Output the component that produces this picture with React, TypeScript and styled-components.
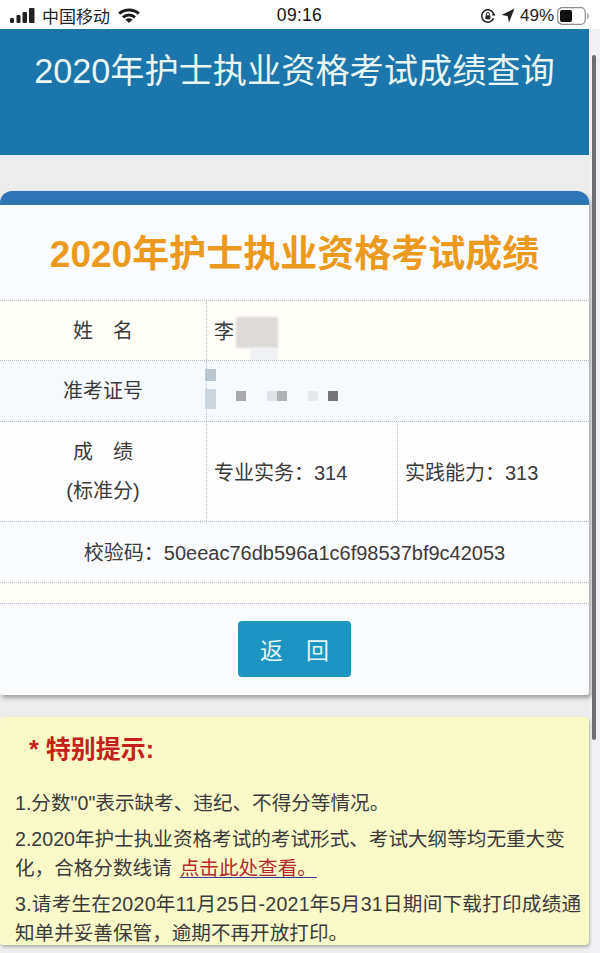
import styled, { createGlobalStyle } from "styled-components";

const GlobalStyle = createGlobalStyle`
  html, body {
    margin: 0;
    padding: 0;
    background: #f1f1f4;
  }
  * {
    box-sizing: border-box;
  }
`;

const Screen = styled.div`
  position: relative;
  width: 600px;
  height: 953px;
  overflow: hidden;
  background: #f1f1f4;
  font-family: "Liberation Sans", "Noto Sans CJK SC", sans-serif;
  color: #3a3a3a;
`;

const StatusBar = styled.div`
  display: grid;
  grid-template-columns: 1fr auto 1fr;
  align-items: center;
  height: 29px;
  padding: 2px 11px 0 10px;
  background: #fff;
  color: #222;
  font-size: 17px;
`;

const StatusLeft = styled.div`
  display: flex;
  align-items: center;
  gap: 7px;
`;

const Carrier = styled.span`
  font-size: 17px;
  margin-right: 1px;
`;

const Clock = styled.span`
  font-size: 17.5px;
  font-weight: 500;
  letter-spacing: 0.3px;
  color: #111;
`;

const StatusRight = styled.div`
  display: flex;
  align-items: center;
  justify-content: flex-end;
  gap: 5px;
`;

const Percent = styled.span`
  font-size: 17px;
  margin-right: -2px;
`;

const Page = styled.main`
  width: 589px;
  background: #ececec;
  height: 924px;
`;

const Banner = styled.header`
  height: 126px;
  padding-top: 22px;
  background: #1c75ab;
  color: #e8f6f4;
  font-size: 34.2px;
  line-height: 40px;
  text-align: center;
`;

const Card = styled.section`
  margin-top: 36px;
  height: 504px;
  border-top: 14px solid #2f74b5;
  border-radius: 12px 12px 3px 3px;
  background: #fbfcfe;
  box-shadow: 2px 3px 4px rgba(70, 70, 70, 0.45);
`;

const CardTitle = styled.h1`
  margin: 0;
  height: 95px;
  padding-top: 29px;
  color: #eb9a1e;
  font-size: 37px;
  line-height: 42px;
  font-weight: 700;
  text-align: center;
`;

const Row = styled.div<{ $height: number; $bg: string }>`
  position: relative;
  display: grid;
  grid-template-columns: 206px 191px 1fr;
  height: ${(p) => p.$height}px;
  border-top: 1px dotted #b4bccb;
  background: ${(p) => p.$bg};
  font-size: 20px;
`;

const LabelCell = styled.div`
  display: flex;
  flex-direction: column;
  align-items: center;
  justify-content: center;
  gap: 15px;
  line-height: 24px;
  text-align: center;
`;

const ValueCell = styled.div<{ $span?: boolean }>`
  display: flex;
  align-items: center;
  padding-left: 7px;
  border-left: 1px dotted #b4bccb;
  grid-column: ${(p) => (p.$span ? "2 / 4" : "auto")};
`;

const CodeCell = styled.div`
  grid-column: 1 / 4;
  padding-top: 19px;
  line-height: 24px;
  text-align: center;
`;

const Smudge = styled.i<{ $x: number; $y: number; $w: number; $h: number; $c: string; $blur?: number }>`
  position: absolute;
  left: ${(p) => p.$x}px;
  top: ${(p) => p.$y}px;
  width: ${(p) => p.$w}px;
  height: ${(p) => p.$h}px;
  background: ${(p) => p.$c};
  filter: blur(${(p) => p.$blur ?? 0}px);
`;

const ButtonBar = styled.div`
  display: flex;
  justify-content: center;
  padding-top: 17px;
  border-top: 1px dotted #b4bccb;
`;

const BackButton = styled.button`
  width: 113px;
  height: 56px;
  border: none;
  border-radius: 4px;
  background: #1d95c2;
  color: #e4f6f6;
  font: inherit;
  font-size: 23px;
`;

const Notice = styled.section`
  margin-top: 22px;
  height: 228px;
  padding: 15px 0 0 15px;
  border-radius: 4px;
  background: #fafac8;
  box-shadow: 1px 2px 3px rgba(90, 90, 90, 0.4);
  font-size: 19.6px;
`;

const NoticeTitle = styled.h2`
  margin: 0 0 23px 14px;
  color: #c4201c;
  font-size: 25px;
  line-height: 34px;
  font-weight: 700;
`;

const NoticeItem = styled.p`
  margin: 0 0 7px;
  line-height: 29px;

  &:last-child {
    margin-bottom: 0;
  }
`;

const WideRun = styled.span`
  letter-spacing: 0.25px;
`;

const NoticeLink = styled.a`
  margin-left: 8px;
  color: #b3282c;
  text-decoration: underline;
  text-decoration-color: #3c3a9c;
  text-underline-offset: 2px;
`;

const ScrollThumb = styled.div`
  position: absolute;
  left: 592px;
  top: 55px;
  width: 4px;
  height: 685px;
  border-radius: 2px;
  background: #6c6c72;
`;

function SignalIcon() {
  return (
    <svg width="25" height="15" viewBox="0 0 25 15">
      <rect x="0" y="10" width="4" height="5" rx="1.2" fill="#222" />
      <rect x="6.5" y="7" width="4" height="8" rx="1" fill="#222" />
      <rect x="12.5" y="4" width="4.5" height="11" rx="1" fill="#222" />
      <rect x="19" y="0" width="5.5" height="15" rx="1" fill="#222" />
    </svg>
  );
}

function WifiIcon() {
  return (
    <svg width="22" height="15" viewBox="0 0 22 15" fill="none" stroke="#1c1c1c" strokeWidth="3">
      <path d="M1.2 5.6 C6.6 0.8 15.4 0.8 20.8 5.6" />
      <path d="M5 9.4 C8.4 6.3 13.6 6.3 17 9.4" />
      <path d="M11 15 L7.4 11.4 C9.6 9.9 12.4 9.9 14.6 11.4 Z" fill="#1c1c1c" stroke="none" />
    </svg>
  );
}

function RotationLockIcon() {
  return (
    <svg width="16" height="16" viewBox="0 0 16 16" fill="none">
      <path d="M13.6 10.4 A6.2 6.2 0 1 1 13.6 5.6" stroke="#222" strokeWidth="1.5" />
      <path d="M11.6 7.4 L15.6 7.4 L13.6 4.6 Z" fill="#222" />
      <rect x="5.4" y="7.2" width="5" height="4" rx="0.6" fill="#222" />
      <path d="M6.4 7.2 V5.9 A1.5 1.5 0 0 1 9.4 5.9 V7.2" stroke="#222" strokeWidth="1" />
    </svg>
  );
}

function LocationIcon() {
  return (
    <svg width="14" height="15" viewBox="0 0 14 15">
      <path d="M13.5 0.5 L0.5 7 L6.6 8 L8 14.5 Z" fill="#222" />
    </svg>
  );
}

function BatteryIcon() {
  return (
    <svg width="32" height="18" viewBox="0 0 32 18" fill="none">
      <rect x="0.7" y="0.7" width="27.6" height="16.6" rx="4.5" stroke="#8c8c8c" strokeWidth="1.2" />
      <rect x="3" y="3" width="12" height="12" rx="2" fill="#111" />
      <path d="M30 6.5 C31.4 7 31.4 11 30 11.5" stroke="#8c8c8c" strokeWidth="1.2" />
    </svg>
  );
}

export default function App() {
  return (
    <>
      <GlobalStyle />
      <Screen>
        <StatusBar>
          <StatusLeft>
            <SignalIcon />
            <Carrier>中国移动</Carrier>
            <WifiIcon />
          </StatusLeft>
          <Clock>09:16</Clock>
          <StatusRight>
            <RotationLockIcon />
            <LocationIcon />
            <Percent>49%</Percent>
            <BatteryIcon />
          </StatusRight>
        </StatusBar>

        <Page>
          <Banner>2020年护士执业资格考试成绩查询</Banner>

          <Card>
            <CardTitle>2020年护士执业资格考试成绩</CardTitle>

            <Row $height={60} $bg="#fffef8">
              <LabelCell>姓&emsp;名</LabelCell>
              <ValueCell $span>李</ValueCell>
              <Smudge $x={236} $y={16} $w={42} $h={31} $c="#dcdbd9" $blur={1} />
              <Smudge $x={250} $y={48} $w={28} $h={12} $c="#eef0f4" $blur={1} />
            </Row>

            <Row $height={61} $bg="#f6f9fd">
              <LabelCell>准考证号</LabelCell>
              <ValueCell $span />
              <Smudge $x={205} $y={8} $w={11} $h={12} $c="#b9c6d0" />
              <Smudge $x={205} $y={28} $w={11} $h={20} $c="#cdd7df" />
              <Smudge $x={236} $y={30} $w={10} $h={10} $c="#aaaaac" />
              <Smudge $x={267} $y={30} $w={10} $h={10} $c="#e0e3e7" />
              <Smudge $x={277} $y={30} $w={10} $h={10} $c="#b0b3b6" />
              <Smudge $x={308} $y={30} $w={10} $h={10} $c="#e6e8ec" />
              <Smudge $x={328} $y={30} $w={10} $h={10} $c="#777779" />
            </Row>

            <Row $height={100} $bg="#fefefe">
              <LabelCell>
                <span>成&emsp;绩</span>
                <span>(标准分)</span>
              </LabelCell>
              <ValueCell>专业实务：314</ValueCell>
              <ValueCell>实践能力：313</ValueCell>
            </Row>

            <Row $height={61} $bg="#fbfcfe">
              <CodeCell>校验码：50eeac76db596a1c6f98537bf9c42053</CodeCell>
            </Row>

            <Row $height={21} $bg="#fffef6" />

            <ButtonBar>
              <BackButton>返&emsp;回</BackButton>
            </ButtonBar>
          </Card>

          <Notice>
            <NoticeTitle>* 特别提示:</NoticeTitle>
            <NoticeItem>1.分数"0"表示缺考、违纪、不得分等情况。</NoticeItem>
            <NoticeItem>
              2.2020年护士执业资格考试的考试形式、考试大纲等均无重大变化，合格分数线请
              <NoticeLink>点击此处查看。</NoticeLink>
            </NoticeItem>
            <NoticeItem>
              <WideRun>3.请考生在2020年11月25日-2021年5月31日期间下载打印成绩通</WideRun>
              知单并妥善保管，逾期不再开放打印。
            </NoticeItem>
          </Notice>
        </Page>

        <ScrollThumb />
      </Screen>
    </>
  );
}
